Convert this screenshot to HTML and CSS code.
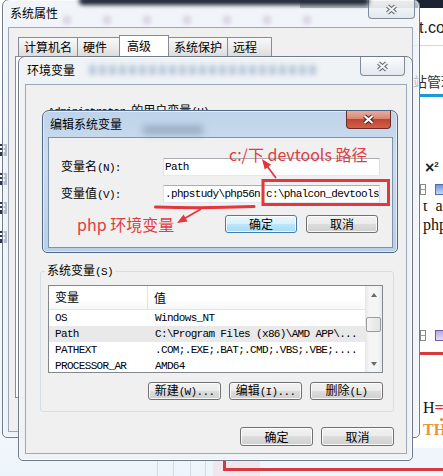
FILE: index.html
```html
<!DOCTYPE html>
<html lang="zh-CN">
<head>
<meta charset="utf-8">
<title>编辑系统变量</title>
<link rel="stylesheet" href="styles.css">
</head>
<body>
<main class="desk">
  <div class="bd-top"></div>
  <div class="bd-left"><i class="glyph"></i><i class="glyph"></i><i class="glyph"></i><i class="glyph"></i></div>
  <div class="bd-page">
    <span class="pg-url">t.com</span>
    <span class="pg-rule"></span>
    <span class="pg-nav">站管理</span>
    <span class="pg-blue"></span>
    <span class="pg-sup">×<sup>2</sup></span>
    <span class="pg-icons"><i class="ic-g"></i><i class="ic-b"></i></span>
    <span class="pg-code pg-cut">t_ac</span>
    <span class="pg-code">php</span>
    <span class="pg-icons pg-icons2"><i class="ic-g"></i><i class="ic-p"></i></span>
    <span class="pg-red"></span>
    <span class="pg-code pg-h">H<b>=</b></span>
    <span class="pg-dot"></span>
    <span class="pg-code pg-th">TH</span>
  </div>
  <div class="bd-table"></div>
  <div class="bd-pink"></div>
  <div class="bd-mark"></div>

  <section class="win win-sys">
    <header class="tbar">
      <span class="ttl">系统属性</span>
      <button class="xbtn" type="button" aria-label="关闭"><svg width="13" height="11" viewBox="0 0 13 11"><path d="M2.5 2 L10.5 9 M10.5 2 L2.5 9" stroke="#5d6670" stroke-width="4.2"/><path d="M2.5 2 L10.5 9 M10.5 2 L2.5 9" stroke="#eef0f2" stroke-width="2.2"/></svg></button>
    </header>
    <div class="client sys-client">
      <nav class="tabs">
        <span class="tab">计算机名</span>
        <span class="tab">硬件</span>
        <span class="tab sel">高级</span>
        <span class="tab">系统保护</span>
        <span class="tab">远程</span>
      </nav>
      <div class="tabpage"></div>
    </div>
  </section>

  <section class="win win-env">
    <header class="tbar">
      <span class="ttl">环境变量</span>
      <button class="xbtn" type="button" aria-label="关闭"><svg width="13" height="11" viewBox="0 0 13 11"><path d="M2.5 2 L10.5 9 M10.5 2 L2.5 9" stroke="#5d6670" stroke-width="4.2"/><path d="M2.5 2 L10.5 9 M10.5 2 L2.5 9" stroke="#eef0f2" stroke-width="2.2"/></svg></button>
    </header>
    <div class="client env-client">
      <p class="user-lbl"><span class="m">Administrator </span>的用户变量<span class="m">(U)</span></p>
      <div class="user-group"></div>
      <fieldset class="group">
        <legend>系统变量<span class="m">(S)</span></legend>
        <div class="listview">
          <div class="lv-main">
            <div class="lv-head"><span>变量</span><span>值</span></div>
            <div class="lv-row"><span>OS</span><span>Windows_NT</span></div>
            <div class="lv-row sel"><span>Path</span><span>C:\Program Files (x86)\AMD APP\...</span></div>
            <div class="lv-row"><span>PATHEXT</span><span>.COM;.EXE;.BAT;.CMD;.VBS;.VBE;....</span></div>
            <div class="lv-row"><span>PROCESSOR_AR</span><span>AMD64</span></div>
          </div>
          <div class="vscroll">
            <span class="arr up"></span>
            <span class="thumb"></span>
            <span class="arr down"></span>
          </div>
        </div>
        <div class="btnrow">
          <button class="btn" type="button">新建<span class="m">(W)...</span></button>
          <button class="btn" type="button">编辑<span class="m">(I)...</span></button>
          <button class="btn" type="button">删除<span class="m">(L)</span></button>
        </div>
      </fieldset>
      <div class="btnrow foot">
        <button class="btn tall" type="button">确定</button>
        <button class="btn tall" type="button">取消</button>
      </div>
    </div>
  </section>

  <section class="win win-edit">
    <header class="tbar">
      <span class="ttl">编辑系统变量</span>
      <button class="xbtn red" type="button" aria-label="关闭"><svg width="13" height="11" viewBox="0 0 13 11"><path d="M2.5 2 L10.5 9 M10.5 2 L2.5 9" stroke="#4a1f1a" stroke-width="4.2"/><path d="M2.5 2 L10.5 9 M10.5 2 L2.5 9" stroke="#ffffff" stroke-width="2.2"/></svg></button>
    </header>
    <div class="client edit-client">
      <div class="form">
        <span class="flabel">变量名<span class="m">(N):</span></span>
        <span class="field m">Path</span>
        <span class="flabel">变量值<span class="m">(V):</span></span>
        <span class="field m">.phpstudy\php56n;c:\phalcon_devtools<i class="caret"></i></span>
      </div>
      <div class="btnrow edit-btns">
        <button class="btn def" type="button">确定</button>
        <button class="btn" type="button">取消</button>
      </div>
    </div>
  </section>

  <svg class="annot" width="443" height="476" viewBox="0 0 443 476">
    <rect x="263" y="180.5" width="125.5" height="24" fill="none" stroke="#e3373d" stroke-width="3"/>
    <path d="M155.5 207 Q205 208.5 254 206.5" fill="none" stroke="#e3373d" stroke-width="3" stroke-linecap="round"/>
    <line x1="276" y1="178" x2="267" y2="166" stroke="#e3373d" stroke-width="1.8"/>
    <polygon points="262,159 271.1,164.7 264.7,169.5" fill="#e3373d"/>
    <line x1="201" y1="209" x2="185" y2="218.3" stroke="#e3373d" stroke-width="1.8"/>
    <polygon points="177,223 187.6,221.5 183.6,214.5" fill="#e3373d"/>
  </svg>
  <span class="note note-a">c:/下 devtools 路径</span>
  <span class="note note-b">php 环境变量</span>
</main>
</body>
</html>
```

FILE: styles.css
```css
* { box-sizing: border-box; }
html, body { margin: 0; padding: 0; }
body {
  width: 443px; height: 476px; overflow: hidden;
  font-family: "Noto Sans CJK SC", "Liberation Sans", sans-serif;
  font-size: 12px; color: #000;
}
.desk {
  position: relative; width: 443px; height: 476px; overflow: hidden;
  background: linear-gradient(#ffffff 0, #f3f7fa 80%, #eef5fa 100%);
}
.m {
  font-family: "Liberation Mono", "DejaVu Sans Mono", monospace;
  font-size: 11px; letter-spacing: -0.66px;
}

/* ---------- backdrop (what lies behind the windows) ---------- */
.bd-top { position: absolute; left: 300px; top: 0; width: 143px; height: 8px; background: #1c2434; }
.bd-left {
  position: absolute; left: -3px; top: 144px;
  display: flex; flex-direction: column; gap: 17px;
}
.glyph {
  display: block; width: 10px; height: 12px;
  border: 2px solid #2b3850; border-left-width: 1px;
  background: linear-gradient(transparent 2px, #2b3850 2px 4px, transparent 4px 6px, #2b3850 6px 8px, transparent 8px);
}
.bd-page {
  position: absolute; left: 413px; top: 8px; width: 30px; height: 440px;
  background: #fff; display: flex; flex-direction: column; align-items: flex-start;
  white-space: nowrap;
}
.pg-url { margin: 11px 0 0 6px; font: 16px/18px "Liberation Sans", sans-serif; color: #222; }
.pg-rule { margin-top: 8px; width: 30px; height: 1px; background: #d8d8d8; }
.pg-nav { margin-top: 27px; font-size: 14px; line-height: 16px; color: #333; }
.pg-blue { margin: 5px 0 0 7px; width: 23px; height: 3px; background: #1d9ad6; }
.pg-sup { margin: 60px 0 0 12px; font: bold 16px/16px "Liberation Sans", sans-serif; color: #222; }
.pg-sup sup { font-size: 8px; }
.pg-icons { margin: 8px 0 0 7px; display: flex; gap: 9px; }
.ic-g { display: block; width: 6px; height: 11px; border: 1px solid #8a8a8a; background: linear-gradient(#fff 45%, #999 45% 55%, #fff 55%); }
.ic-b { display: block; width: 10px; height: 11px; border: 1px solid #4a6fb0; background: linear-gradient(#6d95d6, #c9d9f2); }
.ic-p { display: block; width: 10px; height: 11px; border: 1px solid #6a5aa8; background: linear-gradient(#b7a8e4, #e3dcf6); }
.pg-code { font: 16px/18px "Liberation Serif", serif; color: #111; margin: 4px 0 0 10px; }
.pg-cut { height: 9px; overflow: hidden; line-height: 6px; margin-top: 8px; }
.pg-icons2 { margin-top: 96px; }
.pg-red { margin: 11px 0 0 7px; width: 23px; height: 3px; background: #d83b3b; }
.pg-h { margin-top: 44px; }
.pg-h b { color: #d62f2f; }
.pg-dot { margin: 1px 0 0 27px; width: 3px; height: 3px; border-radius: 50%; background: #e8862a; }
.pg-th { margin-top: 0; font-weight: bold; color: #e8943a; }
.bd-table {
  position: absolute; left: 157px; top: 446px; width: 50px; height: 30px;
  background: linear-gradient(90deg, #d2dae2 0 1px, transparent 1px 16px, #d2dae2 16px 17px, transparent 17px 33px, #d2dae2 33px 34px, transparent 34px 48px, #d2dae2 48px 49px, transparent 49px);
}
.bd-pink { position: absolute; left: 213px; top: 452px; width: 47px; height: 24px; background: #f1e6ec; }
.bd-mark {
  position: absolute; left: 223px; top: 457px; width: 230px; height: 14px;
  border-left: 3px solid #d9393e; border-bottom: 3px solid #d9393e;
}

/* ---------- windows ---------- */
.win {
  position: absolute; display: flex; flex-direction: column;
  border: 1px solid #6f7b89; border-radius: 7px 7px 5px 5px;
  box-shadow: 0 0 0 1px rgba(255,255,255,.55) inset;
}
.win-sys {
  left: 2px; top: -1px; width: 418px; height: 439px; z-index: 1;
  background: rgba(236, 241, 246, .72);
}
.win-env {
  left: 18px; top: 56px; width: 395px; height: 405px; z-index: 2;
  background: rgba(238, 242, 246, .96);
}
.win-edit {
  left: 42px; top: 110px; width: 356px; height: 143px; z-index: 3;
  background: linear-gradient(#bed3ea 0, #cbdcef 30%, #b9cfe7 100%);
  border-color: #4e6784;
}

.tbar { flex: none; height: 28px; display: flex; align-items: flex-start; position: relative; }
.win-edit .tbar { height: 27px; }
.ttl { margin-top: 5px; line-height: 16px; font-size: 12px; color: #000; position: relative; z-index: 1; }
.win-sys .tbar { padding-left: 7px; }
.win-env .tbar { padding-left: 8px; }
.win-edit .tbar { padding-left: 7px; }

/* blurred glass content behind title bars */
.win-sys .tbar::before {
  content: ""; position: absolute; left: 76px; top: -3px; width: 290px; height: 8px;
  background: #1d2535; filter: blur(2px); border-radius: 4px;
}
.win-sys .tbar::after {
  content: ""; position: absolute; left: 60px; top: 16px; width: 250px; height: 8px;
  background: repeating-linear-gradient(90deg, rgba(150,120,160,.25) 0 8px, transparent 8px 40px);
  filter: blur(2px);
}
.win-env .tbar::after {
  content: ""; position: absolute; left: 70px; top: 8px; width: 230px; height: 10px;
  background: repeating-linear-gradient(90deg, rgba(90,120,170,.35) 0 7px, transparent 7px 10px);
  filter: blur(2.5px);
}
.win-edit .tbar::after {
  content: ""; position: absolute; left: 100px; top: 14px; width: 60px; height: 10px;
  background: rgba(110,130,155,.45); filter: blur(3px);
}

.xbtn {
  margin: 0 0 0 auto; padding: 0; height: 19px; width: 45px;
  border: 1px solid #7f8c9b; border-top: 0; border-radius: 0 0 4px 4px;
  background: linear-gradient(rgba(255,255,255,.75), rgba(222,228,235,.75));
  display: flex; align-items: center; justify-content: center;
}
.win-sys .xbtn { width: 47px; margin-right: 4px; }
.win-env .xbtn { margin-right: 7px; }
.win-edit .xbtn { height: 18px; margin-right: 6px; }
.xbtn.red {
  border-color: #6b2b24;
  background: linear-gradient(#e9ad9f 0, #d98775 45%, #c4432f 50%, #d0614b 100%);
}

.client {
  flex: 1; background: #f0f0f0; min-height: 0;
  box-shadow: 0 0 0 1px #9ca8b5;
}
.win-sys .client { margin: 0 7px 6px 6px; }
.win-env .client { margin: 0 6px 7px 7px; }
.win-edit .client { margin: 0 5px 5px 6px; box-shadow: 0 0 0 1px #7d93ac; }

/* ---------- 系统属性 ---------- */
.sys-client { padding-top: 7px; }
.tabs {
  display: flex; align-items: flex-end; height: 21px;
  padding-left: 9px; position: relative; z-index: 1;
}
.tab {
  height: 19px; min-width: 45px; padding: 0 5px; margin-right: -1px;
  border: 1px solid #898c95; border-bottom: 0;
  background: linear-gradient(#f8f8f8 0, #ececec 50%, #dcdcdc 100%);
  line-height: 17px; font-size: 12px; white-space: nowrap;
}
.tab.sel {
  height: 22px; margin: 0 -1px -1px -2px; padding: 0 7px; min-width: 50px;
  background: #fff; position: relative; z-index: 2; line-height: 19px;
}
.tabpage {
  margin-left: 6px; width: 392px; height: 342px;
  border: 1px solid #898c95; background: #fff;
}

/* ---------- 环境变量 ---------- */
.env-client { padding: 0 12px 0 14px; }
.user-lbl { margin: 17px 0 0 8px; line-height: 16px; white-space: nowrap; }
.user-group { height: 143px; }
.group {
  margin: 0; min-width: 0;
  padding: 6px 10px 11px 7px;
  border: 1px solid #d5dfe5; border-radius: 3px;
}
.group legend { padding: 0 2px; margin-left: -3px; line-height: 14px; font-size: 12px; }

.listview {
  height: 88px; display: flex; background: #fff;
  border: 1px solid #828790;
}
.lv-main { flex: 1; min-width: 0; overflow: hidden; }
.lv-head {
  display: grid; grid-template-columns: 99px 1fr; height: 24px;
  align-items: center; border-bottom: 1px solid #e5e5e5;
  background: linear-gradient(#ffffff 55%, #f6f7f9);
  font-size: 12px; line-height: 22px;
}
.lv-head span:first-child { padding-left: 6px; border-right: 1px solid #e3e3e3; height: 100%; }
.lv-head span + span { padding-left: 6px; }
.lv-row {
  display: grid; grid-template-columns: 99px 1fr; height: 16px; line-height: 16px;
  font-family: "Liberation Mono", "DejaVu Sans Mono", monospace;
  font-size: 11px; letter-spacing: -0.66px; white-space: nowrap;
}
.lv-row span { overflow: hidden; }
.lv-row span:first-child { padding-left: 6px; }
.lv-row span + span { padding-left: 7px; }
.lv-row.sel { background: #e9e9e9; }

.vscroll {
  width: 17px; flex: none; display: flex; flex-direction: column;
  background: linear-gradient(90deg, #e6e6e6 0, #f5f5f5 25%, #f5f5f5 75%, #e9e9e9 100%);
}
.arr { height: 17px; display: flex; align-items: center; justify-content: center; flex: none; }
.arr::before { content: ""; width: 0; height: 0; border-left: 3.5px solid transparent; border-right: 3.5px solid transparent; }
.arr.up::before { border-bottom: 4px solid #6a6a6a; }
.arr.down { margin-top: auto; }
.arr.down::before { border-top: 4px solid #6a6a6a; }
.thumb {
  margin: 14px 1px 0; height: 15px; flex: none;
  border: 1px solid #9c9c9c; border-radius: 2px;
  background: linear-gradient(90deg, #f4f4f4, #e4e4e4);
}

.btnrow { display: flex; justify-content: flex-end; gap: 8px; margin-top: 9px; }
.btnrow.foot { margin-top: 15px; }
.btn {
  width: 73px; height: 18px; padding: 0; margin: 0;
  border: 1px solid #707070; border-radius: 3px;
  background: linear-gradient(#f2f2f2 0, #ebebeb 50%, #dddddd 50%, #cfcfcf 100%);
  box-shadow: inset 0 0 0 1px rgba(255,255,255,.85);
  font-family: "Noto Sans CJK SC", sans-serif; font-size: 12px; line-height: 14px; color: #000;
  white-space: nowrap;
}
.btn.tall { height: 19px; }
.btn.def {
  border-color: #3c7fb1;
  background: linear-gradient(#eaf6fd 0, #d9f0fc 50%, #bee6fd 50%, #a7d9f5 100%);
}

/* ---------- 编辑系统变量 ---------- */
.edit-client { padding: 20px 12px 0 12px; }
.form { display: grid; grid-template-columns: 102px 1fr; row-gap: 9px; align-items: center; }
.flabel { line-height: 16px; white-space: nowrap; }
.field {
  height: 18px; padding-left: 1px; line-height: 16px;
  background: #fff; border: 1px solid;
  border-color: #abadb3 #dbdfe6 #e3e9ef #e2e3ea;
  white-space: nowrap; overflow: hidden; color: #000;
}
.caret { display: inline-block; width: 1px; height: 13px; background: #000; vertical-align: -2px; }
.edit-btns { margin-top: 12px; margin-right: 2px; gap: 9px; }
.edit-btns .btn { width: 72px; }

/* ---------- annotations ---------- */
.annot { position: absolute; left: 0; top: 0; z-index: 10; pointer-events: none; }
.note {
  position: absolute; z-index: 11; color: #e23b43;
  font-size: 16px; line-height: 18px; white-space: nowrap;
  font-family: "Noto Sans CJK SC", "Liberation Sans", sans-serif;
}
.note-a { left: 229px; top: 145px; }
.note-b { left: 77px; top: 215px; }
```
